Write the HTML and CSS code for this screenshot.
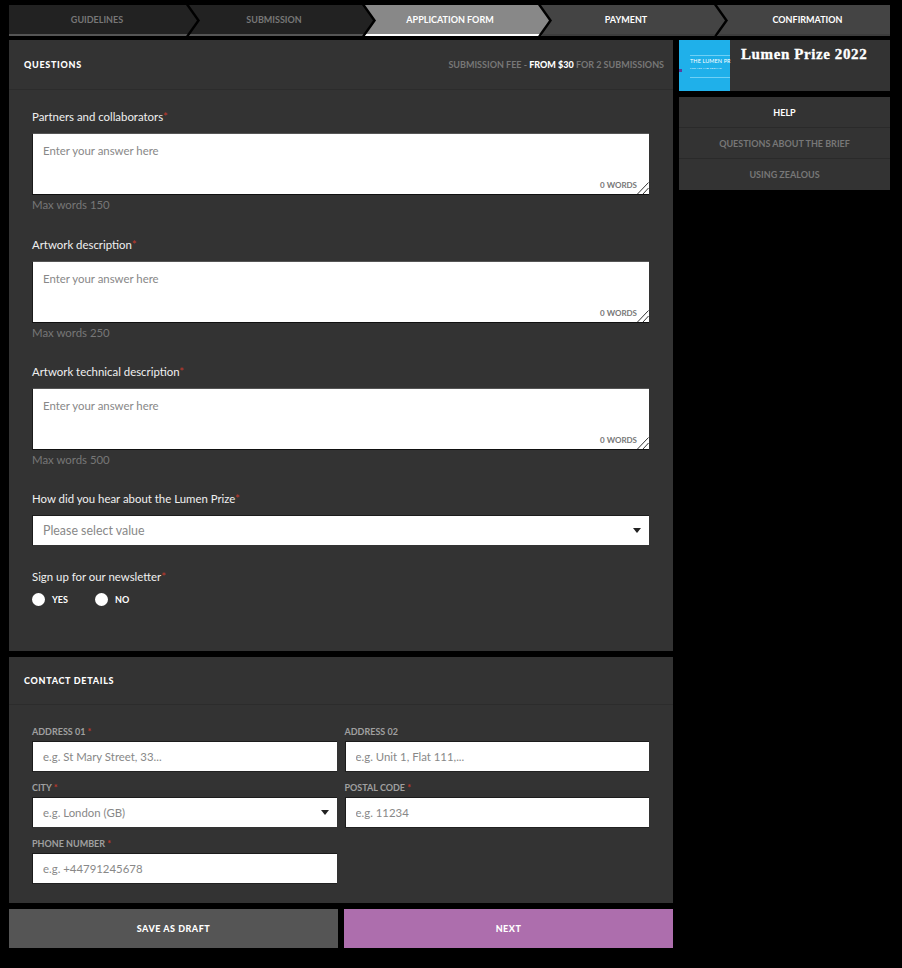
FILE: index.html
```html
<!DOCTYPE html>
<html lang="en">
<head>
  <meta charset="UTF-8" />
  <title>Lumen Prize 2022 - Application form</title>
  <link rel="stylesheet" href="styles.css">
</head>
<body>

  <div class="steps">
    <div class="step step-done step-first">GUIDELINES</div>
    <div class="step step-done">SUBMISSION</div>
    <div class="step step-active">APPLICATION FORM</div>
    <div class="step step-next">PAYMENT</div>
    <div class="step step-next step-last">CONFIRMATION</div>
  </div>

  <div class="layout">
    <div class="main">

      <div class="panel panel-questions">
        <div class="panel-head">
          <h2>QUESTIONS</h2>
          <div class="fee">SUBMISSION FEE - <b>FROM $30</b> FOR 2 SUBMISSIONS</div>
        </div>
        <div class="panel-body">
          <div class="field">
            <label>Partners and collaborators<span class="req">*</span></label>
            <div class="area-wrap">
              <textarea placeholder="Enter your answer here"></textarea>
              <span class="word-count">0 WORDS</span>
              <svg class="grip" width="12" height="12" viewBox="0 0 12 12"><path d="M0.5 12 L11.5 0.5 M6 12 L11.5 6"/></svg>
            </div>
            <div class="hint">Max words 150</div>
          </div>
          <div class="field">
            <label>Artwork description<span class="req">*</span></label>
            <div class="area-wrap">
              <textarea placeholder="Enter your answer here"></textarea>
              <span class="word-count">0 WORDS</span>
              <svg class="grip" width="12" height="12" viewBox="0 0 12 12"><path d="M0.5 12 L11.5 0.5 M6 12 L11.5 6"/></svg>
            </div>
            <div class="hint">Max words 250</div>
          </div>
          <div class="field">
            <label>Artwork technical description<span class="req">*</span></label>
            <div class="area-wrap">
              <textarea placeholder="Enter your answer here"></textarea>
              <span class="word-count">0 WORDS</span>
              <svg class="grip" width="12" height="12" viewBox="0 0 12 12"><path d="M0.5 12 L11.5 0.5 M6 12 L11.5 6"/></svg>
            </div>
            <div class="hint">Max words 500</div>
          </div>
          <div class="field field-select">
            <label>How did you hear about the Lumen Prize<span class="req">*</span></label>
            <div class="select-box">Please select value</div>
          </div>
          <div class="field">
            <label>Sign up for our newsletter<span class="req">*</span></label>
            <div class="radios">
              <div class="radio"><span class="dot"></span>YES</div>
              <div class="radio"><span class="dot"></span>NO</div>
            </div>
          </div>
        </div>
      </div>

      <div class="panel panel-contact">
        <div class="panel-head panel-head-small">
          <h2>CONTACT DETAILS</h2>
        </div>
        <div class="contact-grid">
          <div class="cell">
            <label>ADDRESS 01 <span class="req">*</span></label>
            <input type="text" placeholder="e.g. St Mary Street, 33...">
          </div>
          <div class="cell">
            <label>ADDRESS 02</label>
            <input type="text" placeholder="e.g. Unit 1, Flat 111,...">
          </div>
          <div class="cell">
            <label>CITY <span class="req">*</span></label>
            <div class="select-box select-small">e.g. London (GB)</div>
          </div>
          <div class="cell">
            <label>POSTAL CODE <span class="req">*</span></label>
            <input type="text" placeholder="e.g. 11234">
          </div>
          <div class="cell">
            <label>PHONE NUMBER <span class="req">*</span></label>
            <input type="text" placeholder="e.g. +44791245678">
          </div>
        </div>
      </div>

      <div class="actions">
        <button class="btn btn-draft">SAVE AS DRAFT</button>
        <button class="btn btn-next">NEXT</button>
      </div>

    </div>

    <div class="side">
      <div class="prize">
        <div class="thumb">
          <div class="thumb-inner">
            <div class="thumb-title">THE LUMEN PR</div>
            <div class="thumb-sub">FOR ART AND TECHNO</div>
          </div>
          <span class="thumb-mark"></span>
        </div>
        <div class="prize-name">Lumen Prize 2022</div>
      </div>
      <div class="help">
        <div class="help-row help-title">HELP</div>
        <div class="help-row">QUESTIONS ABOUT THE BRIEF</div>
        <div class="help-row">USING ZEALOUS</div>
      </div>
    </div>
  </div>

</body>
</html>
```

FILE: styles.css
```css
/* ---------------- GENERAL ---------------- */
html, body {
  margin: 0;
  background: #000;
  color: #fff;
  font-family: 'Lato', 'Liberation Sans', sans-serif;
}

body {
  height: 968px;
  padding: 5px 12px 0 9px;
  box-sizing: border-box;
  overflow: hidden;
}

/* ---------------- STEPS ---------------- */
.steps {
  display: flex;
  height: 31px;
}

.step {
  flex: 0 0 186px;
  margin-left: -10px;
  padding-right: 16px;
  box-sizing: border-box;
  display: flex;
  align-items: center;
  justify-content: center;
  font-size: 9px;
  font-weight: 700;
  border-bottom: 2px solid;
  clip-path: polygon(0 0, calc(100% - 13px) 0, calc(100% - 2px) 50%, calc(100% - 13px) 100%, 0 100%, 11px 50%);
}

.step-first {
  flex-basis: 190px;
  margin-left: 0;
  padding-right: 14px;
  clip-path: polygon(0 0, calc(100% - 13px) 0, calc(100% - 2px) 50%, calc(100% - 13px) 100%, 0 100%);
}

.step-last {
  flex-basis: 173px;
  padding: 0 0 0 8px;
  clip-path: polygon(0 0, 100% 0, 100% 100%, 0 100%, 11px 50%);
}

.step-done {
  background: #222;
  border-color: #555;
  color: #777;
}

.step-active {
  background: #888;
  border-color: #fff;
}

.step-next {
  background: #444;
  border-color: #3c3c3c;
}

/* ---------------- LAYOUT ---------------- */
.layout {
  display: flex;
  gap: 6px;
  margin-top: 4px;
}

.main {
  width: 664px;
}

.side {
  width: 211px;
}

/* ---------------- PANELS ---------------- */
.panel {
  background: #333;
  margin-bottom: 6px;
}

.panel-questions {
  height: 611px;
}

.panel-contact {
  height: 246px;
}

.panel-head {
  height: 50px;
  padding: 0 9px 0 15px;
  box-sizing: border-box;
  display: flex;
  align-items: center;
  justify-content: space-between;
  border-bottom: 1px solid #2c2c2c;
}

.panel-head-small {
  height: 48px;
}

.panel-head h2 {
  margin: 0;
  font-size: 9px;
  font-weight: 900;
  letter-spacing: 0.7px;
}

.fee {
  font-size: 9px;
  font-weight: 700;
  color: #777;
}

.fee b {
  color: #fff;
}

.panel-body {
  padding: 19px 24px 0 23px;
}

/* ---------------- FIELDS ---------------- */
.field {
  margin-bottom: 24.5px;
}

.field label {
  display: block;
  height: 16px;
  margin-bottom: 8px;
  font-size: 11.4px;
  line-height: 16px;
  color: #f0f0f0;
}

.req {
  color: #c0392b;
}

.area-wrap {
  position: relative;
  height: 62px;
}

textarea {
  display: block;
  width: 100%;
  height: 62px;
  margin: 0;
  padding: 10px;
  box-sizing: border-box;
  border: 0;
  border-left: 1px solid #1c1c1c;
  border-top: 1px solid #555;
  border-bottom: 1px solid #111;
  border-radius: 0;
  outline: 0;
  resize: none;
  background: #fff;
  font-family: inherit;
  font-size: 11.4px;
  line-height: 14px;
}

textarea::placeholder,
input::placeholder {
  color: #888;
  opacity: 1;
}

.word-count {
  position: absolute;
  right: 12px;
  bottom: 5px;
  font-size: 8px;
  font-weight: 700;
  color: #777;
}

.grip {
  position: absolute;
  right: 0;
  bottom: 1px;
}

.grip path {
  fill: none;
  stroke: #333;
  stroke-width: 1;
}

.hint {
  height: 15px;
  margin-top: 2px;
  font-size: 11.4px;
  line-height: 15px;
  color: #777;
}

.field-select {
  margin-top: -0.5px;
  margin-bottom: 22.5px;
}

.select-box {
  position: relative;
  height: 31px;
  padding: 0 10px;
  box-sizing: border-box;
  display: flex;
  align-items: center;
  background: #fff;
  color: #888;
  font-size: 12.4px;
  border-left: 1px solid #1c1c1c;
  border-bottom: 1px solid #333;
  border-top: 1px solid #1c1c1c;
}

.select-box::after {
  content: "";
  position: absolute;
  right: 8px;
  top: 12px;
  border-left: 4.5px solid transparent;
  border-right: 4.5px solid transparent;
  border-top: 5px solid #222;
}

.select-small {
  font-size: 11.4px;
}

.radios {
  display: flex;
  gap: 27px;
  margin-top: 1px;
}

.radio {
  display: flex;
  align-items: center;
  gap: 7px;
  font-size: 9px;
  font-weight: 700;
}

.dot {
  width: 13px;
  height: 13px;
  border-radius: 50%;
  background: #fff;
}

/* ---------------- CONTACT ---------------- */
.contact-grid {
  display: grid;
  grid-template-columns: 304.5px 304.5px;
  gap: 9px 8px;
  padding: 20px 23px 0;
}

.cell label {
  display: block;
  height: 14px;
  margin-bottom: 2px;
  font-size: 9px;
  font-weight: 700;
  line-height: 14px;
  color: #a0a0a0;
}

.cell input {
  display: block;
  width: 100%;
  height: 31px;
  margin: 0;
  padding: 0 10px;
  box-sizing: border-box;
  border: 0;
  border-left: 1px solid #1c1c1c;
  border-top: 1px solid #1c1c1c;
  border-bottom: 1px solid #222;
  border-radius: 0;
  outline: 0;
  background: #fff;
  font-family: inherit;
  font-size: 11.4px;
}

/* ---------------- BUTTONS ---------------- */
.actions {
  display: flex;
  gap: 6px;
}

.btn {
  flex: 1;
  height: 39px;
  border: 0;
  color: #fff;
  font-family: inherit;
  font-size: 9px;
  font-weight: 900;
  letter-spacing: 0.5px;
}

.btn-draft {
  background: #555;
}

.btn-next {
  background: #ad6ead;
}

/* ---------------- SIDEBAR ---------------- */
.prize {
  display: flex;
  height: 51px;
  background: #333;
  margin-bottom: 6px;
}

.thumb {
  position: relative;
  width: 51px;
  height: 51px;
  background: #1fb0ea;
}

.thumb-inner {
  position: absolute;
  left: 11px;
  right: 0;
  top: 15px;
  height: 21px;
  border-top: 1px solid #6fd0f5;
  border-bottom: 1px solid #6fd0f5;
  white-space: nowrap;
}

.thumb-title {
  font-size: 5.5px;
  line-height: 9px;
  margin-top: 1px;
  letter-spacing: 0.1px;
}

.thumb-sub {
  font-size: 2.6px;
  line-height: 5px;
  letter-spacing: 0.2px;
}

.thumb-mark {
  position: absolute;
  left: 0;
  top: 29px;
  width: 3px;
  height: 3px;
  background: #5a3fa0;
}

.prize-name {
  margin: 4px 0 0 11px;
  font-family: 'Liberation Serif', serif;
  font-size: 15px;
  font-weight: 700;
  letter-spacing: 0.6px;
  line-height: 20px;
  -webkit-text-stroke: 0.3px #fff;
}

.help {
  background: #333;
}

.help-row {
  height: 31px;
  box-sizing: border-box;
  display: flex;
  align-items: center;
  justify-content: center;
  font-size: 9px;
  font-weight: 700;
  color: #777;
  border-bottom: 1px solid #2a2a2a;
}

.help-title {
  color: #fff;
}

.help-row:last-child {
  border-bottom: 0;
  padding-bottom: 1px;
}
```
